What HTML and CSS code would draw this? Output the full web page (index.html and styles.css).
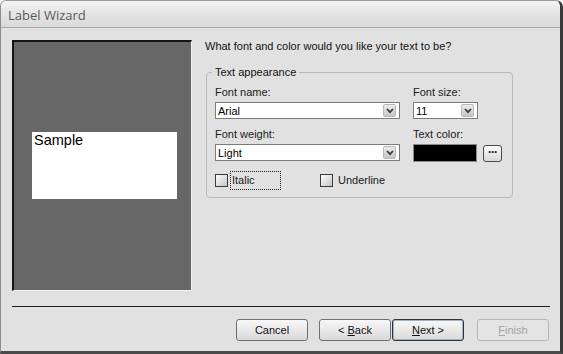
FILE: index.html
```html
<!DOCTYPE html>
<html lang="en">
<head>
    <meta charset="UTF-8">
    <title>Label Wizard</title>
    <link rel="stylesheet" href="styles.css">
</head>
<body>
    <div class="window">
        <div class="titlebar">Label Wizard</div>

        <div class="main">
            <!-- preview of the label -->
            <div class="preview">
                <div class="sample">Sample</div>
            </div>

            <div class="options">
                <p class="question">What font and color would you like your text to be?</p>

                <fieldset class="group">
                    <legend>Text appearance</legend>
                    <div class="grid">
                        <div class="field">
                            <div class="label">Font name:</div>
                            <div class="combo combo-wide">
                                <span class="value">Arial</span>
                                <span class="arrow"><svg width="8" height="6" viewBox="0 0 8 6"><polyline points="1,1 4,4.2 7,1" fill="none" stroke="#3a3a3a" stroke-width="1.8"/></svg></span>
                            </div>
                        </div>
                        <div class="field">
                            <div class="label">Font size:</div>
                            <div class="combo combo-small">
                                <span class="value">11</span>
                                <span class="arrow"><svg width="8" height="6" viewBox="0 0 8 6"><polyline points="1,1 4,4.2 7,1" fill="none" stroke="#3a3a3a" stroke-width="1.8"/></svg></span>
                            </div>
                        </div>
                        <div class="field">
                            <div class="label">Font weight:</div>
                            <div class="combo combo-wide">
                                <span class="value">Light</span>
                                <span class="arrow"><svg width="8" height="6" viewBox="0 0 8 6"><polyline points="1,1 4,4.2 7,1" fill="none" stroke="#3a3a3a" stroke-width="1.8"/></svg></span>
                            </div>
                        </div>
                        <div class="field">
                            <div class="label">Text color:</div>
                            <div class="color-row">
                                <div class="swatch"></div>
                                <div class="dots">&middot;&middot;&middot;</div>
                            </div>
                        </div>
                    </div>

                    <div class="checks">
                        <div class="check check-italic">
                            <span class="box"></span>
                            <span class="check-label focused">Italic</span>
                        </div>
                        <div class="check">
                            <span class="box"></span>
                            <span class="check-label">Underline</span>
                        </div>
                    </div>
                </fieldset>
            </div>
        </div>

        <div class="separator"></div>

        <div class="buttons">
            <div class="btn btn-cancel">Cancel</div>
            <div class="btn">&lt; <u>B</u>ack</div>
            <div class="btn btn-default"><u>N</u>ext &gt;</div>
            <div class="btn btn-disabled"><u>F</u>inish</div>
        </div>
    </div>
</body>
</html>
```

FILE: styles.css
```css
body {
    margin: 0;
    padding: 0;
    background: #ffffff;
    font-family: "Liberation Sans", Arial, sans-serif;
    font-size: 11px;
    color: #1a1a1a;
}
.window {
    width: 563px;
    height: 354px;
    box-sizing: border-box;
    background: #e1e1e1;
    border-top: 1px solid #9a9a9a;
    border-left: 1px solid #8c8c8c;
    border-right: 3px solid #3a3a3a;
    border-bottom: 3px solid #4a4a4a;
    border-radius: 6px 7px 0 0;
    overflow: hidden;
}
.titlebar {
    height: 26px;
    line-height: 28px;
    padding-left: 7px;
    border-bottom: 1px solid #a8a8a8;
    background: linear-gradient(#f3f3f3, #e6e6e6 45%, #d9d9d9);
    font-family: "Open Sans", sans-serif;
    font-size: 13px;
    color: #5a5a5a;
}
.main {
    display: flex;
    gap: 13px;
    padding: 12px 0 0 11px;
}
.preview {
    width: 180px;
    height: 251px;
    box-sizing: border-box;
    background: #676767;
    border-top: 2px solid #151515;
    border-left: 2px solid #151515;
    border-right: 1px solid #f2f2f2;
    border-bottom: 1px solid #f2f2f2;
    display: flex;
    align-items: center;
    padding-left: 18px;
}
.sample {
    width: 145px;
    height: 67px;
    box-sizing: border-box;
    background: #ffffff;
    padding: 0 2px;
    margin-top: -2px;
    font-family: "Liberation Sans", Arial, sans-serif;
    font-size: 14.5px;
    color: #000;
}
.options {
    width: 320px;
}
.question {
    margin: 0;
    line-height: 13px;
    color: #111;
}
.group {
    margin: 12px 0 0 1px;
    width: 307px;
    box-sizing: border-box;
    border: 1px solid #b9b9b9;
    border-radius: 4px;
    padding: 6px 8px 7px 8px;
}
.group legend {
    padding: 0 3px;
    margin-left: -3px;
    line-height: 14px;
    color: #111;
}
.grid {
    display: grid;
    grid-template-columns: 185px 89px;
    column-gap: 13px;
    row-gap: 8px;
}
.label {
    line-height: 14px;
    margin-bottom: 3px;
}
.combo {
    height: 17px;
    box-sizing: border-box;
    border: 1px solid #7b7b7b;
    background: #fff;
    display: flex;
    align-items: center;
    justify-content: space-between;
    padding: 0 3px 0 2px;
}
.combo-wide {
    width: 185px;
}
.combo-small {
    width: 65px;
}
.combo .value {
    color: #000;
}
.arrow {
    width: 13px;
    height: 13px;
    box-sizing: border-box;
    border: 1px solid #b8b8b8;
    border-radius: 2px;
    background: linear-gradient(#ececec, #c6c6c6);
    display: flex;
    align-items: center;
    justify-content: center;
}
.color-row {
    display: flex;
    align-items: center;
    gap: 6px;
}
.swatch {
    width: 64px;
    height: 18px;
    box-sizing: border-box;
    background: #000;
    border: 1px solid #8a8a8a;
}
.dots {
    width: 19px;
    height: 17px;
    box-sizing: border-box;
    border: 1px solid #4a4a4a;
    border-radius: 3px;
    background: linear-gradient(#fbfbfb, #dadada);
    text-align: center;
    line-height: 12px;
    font-weight: bold;
    font-size: 12px;
    letter-spacing: -1px;
}
.checks {
    display: flex;
    align-items: center;
    margin-top: 8px;
    height: 20px;
}
.check {
    display: flex;
    align-items: center;
}
.check-italic {
    width: 105px;
}
.box {
    width: 13px;
    height: 13px;
    box-sizing: border-box;
    border: 1px solid #3a3a3a;
    background: linear-gradient(135deg, #ffffff, #c4c4c4);
}
.check-label {
    margin-left: 5px;
    line-height: 13px;
}
.focused {
    margin-left: 2px;
    width: 51px;
    height: 19px;
    box-sizing: border-box;
    border: 1px dotted #222;
    padding-left: 1px;
    line-height: 17px;
}
.separator {
    height: 1px;
    background: #1e1e1e;
    margin: 15px 10px 0 11px;
}
.buttons {
    display: flex;
    justify-content: flex-end;
    padding: 12px 11px 0 0;
}
.btn {
    width: 72px;
    height: 22px;
    box-sizing: border-box;
    border: 1px solid #707070;
    border-radius: 3px;
    background: linear-gradient(#f7f7f7, #e9e9e9 50%, #d9d9d9);
    text-align: center;
    line-height: 20px;
    color: #111;
}
.btn-cancel {
    margin-right: 11px;
}
.btn-default {
    margin-left: 1px;
    border: 1px solid #333;
    box-shadow: inset 0 0 0 1px #9fb3c8;
}
.btn-disabled {
    margin-left: 13px;
    border-color: #b5b5b5;
    background: #e4e4e4;
    color: #a3a3a3;
}
```
